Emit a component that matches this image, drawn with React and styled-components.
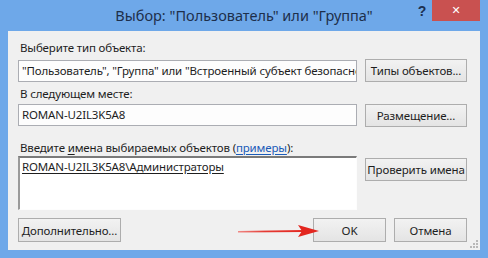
import React from "react";
import styled, { createGlobalStyle } from "styled-components";

const Global = createGlobalStyle`
  html, body { margin: 0; padding: 0; background: #6ea8e9; }
  body { width: 488px; height: 258px; overflow: hidden; }
`;

const Window = styled.div`
  width: 488px;
  height: 258px;
  background: #6ea8e9;
  display: flex;
  flex-direction: column;
  font-family: "Noto Sans", "Open Sans", sans-serif;
  position: relative;
`;

const TitleBar = styled.div`
  height: 31px;
  position: relative;
  display: flex;
  align-items: center;
  justify-content: center;
`;

const Title = styled.div`
  font-size: 14.5px;
  color: #1d2f4b;
  margin-top: -1px;
`;

const Controls = styled.div`
  position: absolute;
  right: 8px;
  top: 0;
  display: flex;
  align-items: flex-start;
`;

const Help = styled.div`
  width: 20px;
  height: 21px;
  display: flex;
  align-items: center;
  justify-content: center;
  font: bold 14px "Liberation Sans", sans-serif;
  color: #1c3050;
`;

const Close = styled.div`
  width: 48px;
  height: 21px;
  background: #c95150;
  color: #fff;
  display: flex;
  align-items: center;
  justify-content: center;
  font: bold 11px "DejaVu Sans", sans-serif;
`;

const Client = styled.div`
  margin: 0 8px 8px 8px;
  height: 219px;
  background: #f0f0f0;
  padding: 10px 13px 9px 10px;
  box-sizing: border-box;
  display: flex;
  flex-direction: column;
  font-size: 11.5px;
  letter-spacing: -0.15px;
  color: #1e1e1e;
  position: relative;
`;

const Label = styled.div`
  height: 14px;
  line-height: 14px;
  margin-top: ${(p) => p.$mt || 0}px;
  padding-left: 2px;
  white-space: nowrap;
`;

const Row = styled.div`
  display: grid;
  grid-template-columns: 339px 102px;
  column-gap: 8px;
  align-items: start;
  margin-top: ${(p) => p.$mt || 0}px;
`;

const TextBox = styled.div`
  height: 22px;
  box-sizing: border-box;
  border: 1px solid #abadb3;
  background: #fdfdfd;
  padding: 0 3px;
  line-height: 20px;
  white-space: nowrap;
  overflow: hidden;
`;

const TextArea = styled.div`
  height: 54px;
  box-sizing: border-box;
  border-style: solid;
  border-width: 2px 1px 1px 2px;
  border-color: #7a7a7a #fdfdfd #fdfdfd #9a9a9a;
  background: #fff;
  padding: 1px 2px;
  line-height: 16px;
`;

const Button = styled.div`
  height: ${(p) => p.$h || 23}px;
  box-sizing: border-box;
  border: 1px solid #adadad;
  background: linear-gradient(#f2f2f2, #e4e4e4);
  display: flex;
  align-items: center;
  justify-content: center;
  white-space: nowrap;
  margin-top: ${(p) => p.$mt || 0}px;
  width: ${(p) => (p.$w ? p.$w + "px" : "auto")};
`;

const Under = styled.span`
  text-decoration: underline;
  text-underline-offset: 2px;
`;

const Link = styled.span`
  color: #1a5bb8;
  text-decoration: underline;
  text-underline-offset: 2px;
`;

const BottomRow = styled.div`
  margin-top: 8px;
  display: flex;
  align-items: center;
`;

const Spacer = styled.div`
  flex: 1;
`;

const Gap = styled.div`
  width: 8px;
`;

const Arrow = styled.svg`
  position: absolute;
  left: 228px;
  top: 192px;
`;

const Grip = styled.svg`
  position: absolute;
  right: 1px;
  bottom: 1px;
`;

export default function App() {
  return (
    <>
      <Global />
      <Window>
        <TitleBar>
          <Title>Выбор: "Пользователь" или "Группа"</Title>
          <Controls>
            <Help>?</Help>
            <Close>✕</Close>
          </Controls>
        </TitleBar>
        <Client>
          <Label>Выберите тип объекта:</Label>
          <Row $mt={5}>
            <TextBox>"Пользователь", "Группа" или "Встроенный субъект безопасности"</TextBox>
            <Button $mt={-1}>Типы объектов...</Button>
          </Row>
          <Label $mt={5}>В следующем месте:</Label>
          <Row $mt={3}>
            <TextBox>ROMAN-U2IL3K5A8</TextBox>
            <Button>Размещение...</Button>
          </Row>
          <Label $mt={14}>
            Введите <Under>и</Under>мена выбираемых объектов (<Link>примеры</Link>):
          </Label>
          <Row $mt={1}>
            <TextArea>
              <Under>ROMAN-U2IL3K5A8\Администраторы</Under>
            </TextArea>
            <Button $mt={2}>Проверить имена</Button>
          </Row>
          <BottomRow>
            <Button $w={103} $h={24}>Дополнительно...</Button>
            <Spacer />
            <Button $w={73} $h={24}>OK</Button>
            <Gap />
            <Button $w={73} $h={24}>Отмена</Button>
          </BottomRow>
          <Arrow width="90" height="16" viewBox="0 0 90 16">
            <defs>
              <linearGradient id="ag" x1="0" x2="1" y1="0" y2="0">
                <stop offset="0" stopColor="#f08a86" />
                <stop offset="0.4" stopColor="#e53a33" />
                <stop offset="1" stopColor="#e3261f" />
              </linearGradient>
            </defs>
            <path d="M2 8 L68 7 L68 9 L2 9.6 Z" fill="url(#ag)" />
            <path d="M62 2 L83 8 L62 14 L66 8 Z" fill="#e3261f" />
          </Arrow>
          <Grip width="10" height="10" viewBox="0 0 10 10">
            <g fill="#b8b8b8">
              <rect x="7" y="1" width="2" height="2" />
              <rect x="4" y="4" width="2" height="2" />
              <rect x="7" y="4" width="2" height="2" />
              <rect x="1" y="7" width="2" height="2" />
              <rect x="4" y="7" width="2" height="2" />
              <rect x="7" y="7" width="2" height="2" />
            </g>
          </Grip>
        </Client>
      </Window>
    </>
  );
}
